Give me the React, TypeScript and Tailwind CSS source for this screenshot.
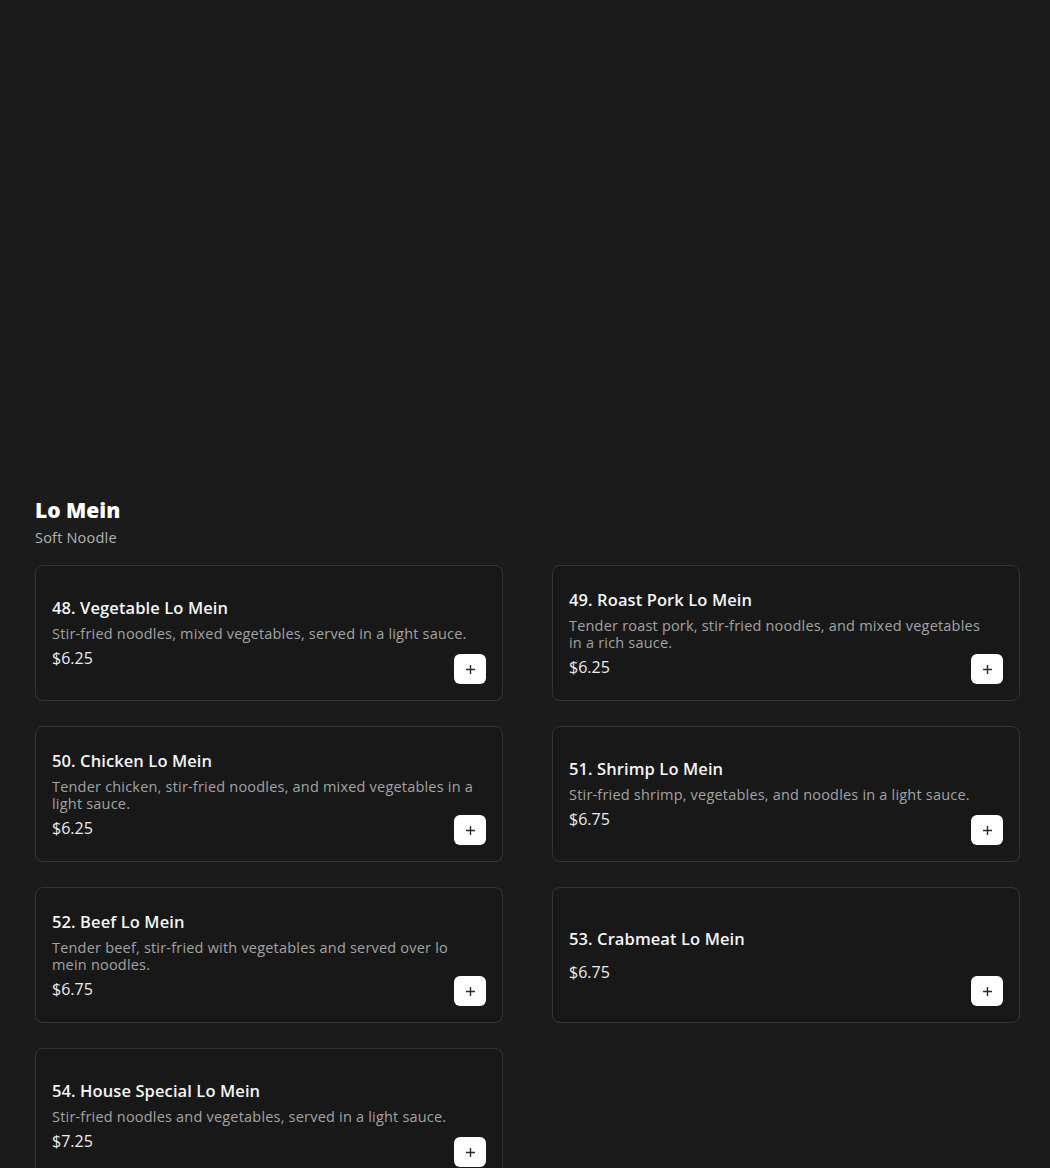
import React from "react";

type Item = { name: string; desc: string; price: string };

const items: Item[] = [
  { name: "48. Vegetable Lo Mein", desc: "Stir-fried noodles, mixed vegetables, served in a light sauce.", price: "$6.25" },
  { name: "49. Roast Pork Lo Mein", desc: "Tender roast pork, stir-fried noodles, and mixed vegetables in a rich sauce.", price: "$6.25" },
  { name: "50. Chicken Lo Mein", desc: "Tender chicken, stir-fried noodles, and mixed vegetables in a light sauce.", price: "$6.25" },
  { name: "51. Shrimp Lo Mein", desc: "Stir-fried shrimp, vegetables, and noodles in a light sauce.", price: "$6.75" },
  { name: "52. Beef Lo Mein", desc: "Tender beef, stir-fried with vegetables and served over lo mein noodles.", price: "$6.75" },
  { name: "53. Crabmeat Lo Mein", desc: "", price: "$6.75" },
  { name: "54. House Special Lo Mein", desc: "Stir-fried noodles and vegetables, served in a light sauce.", price: "$7.25" },
];

function Card({ item }: { item: Item }) {
  return (
    <div className="relative h-[136px] rounded-lg border border-[#343434] bg-[#181818] flex flex-col justify-center pl-[16px] pr-[26px]">
      <div className="text-[16.5px] leading-[24px] font-semibold text-[#f5f5f5] tracking-[0.1px]">{item.name}</div>
      <div className="mt-[5px] text-[14.5px] leading-[17px] text-[#a3a3a3] tracking-[0.2px]">{item.desc}</div>
      <div className="mt-[4px] text-[16px] leading-[24px] text-[#ececec]">{item.price}</div>
      <button className="absolute right-[16px] bottom-[16px] w-[32px] h-[30px] rounded-[6px] bg-white flex items-center justify-center">
        <svg width="11" height="11" viewBox="0 0 11 11" fill="none">
          <path d="M5.5 1v9M1 5.5h9" stroke="#2a2a2a" strokeWidth="1.4" />
        </svg>
      </button>
    </div>
  );
}

export default function App() {
  return (
    <div
      className="min-h-[1168px] bg-[#1b1b1b] pt-[496px] pl-[35px] pr-[30px] pb-[40px]"
      style={{ fontFamily: '"Open Sans", "Liberation Sans", sans-serif' }}
    >
      <h2 className="text-[21px] leading-[28px] font-extrabold text-white">Lo Mein</h2>
      <p className="mt-[4px] text-[14.5px] leading-[20px] text-[#b3b3b3] tracking-[0.2px]">Soft Noodle</p>
      <div className="mt-[17px] grid grid-cols-2 gap-x-[49px] gap-y-[25px]">
        {items.map((it) => (
          <Card key={it.name} item={it} />
        ))}
      </div>
    </div>
  );
}
